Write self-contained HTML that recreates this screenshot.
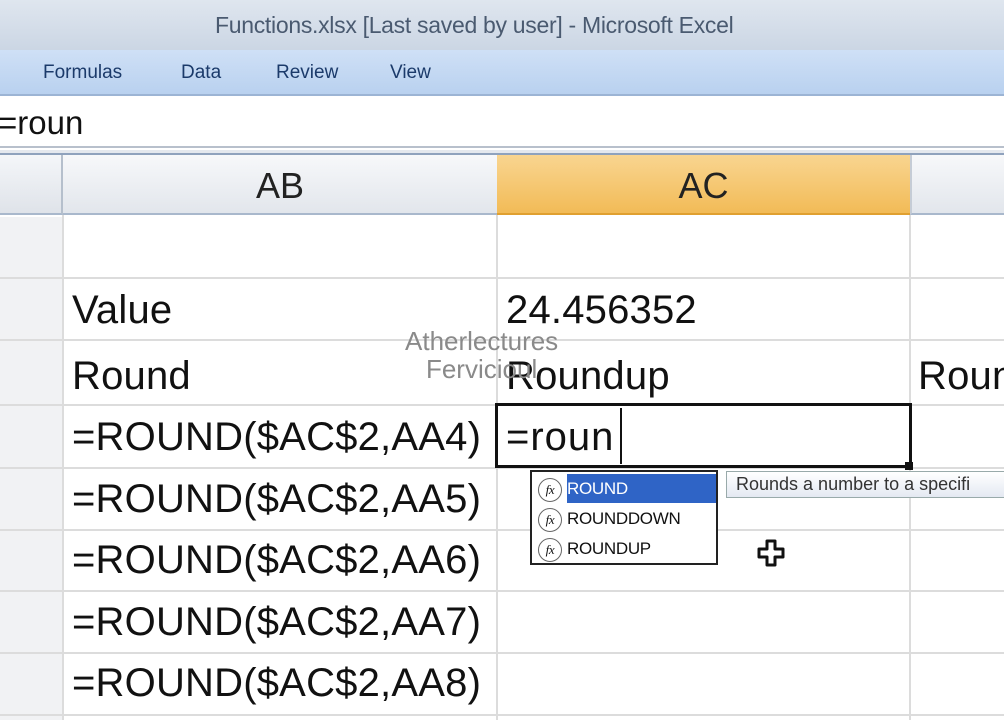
<!DOCTYPE html>
<html><head><meta charset="utf-8"><style>
*{margin:0;padding:0;box-sizing:border-box}
body{width:1004px;height:720px;overflow:hidden;background:#fff;font-family:"Liberation Sans",sans-serif;position:relative}
.a{position:absolute;white-space:nowrap}
.t{font-size:40px;color:#111;letter-spacing:0.2px}
.hl{position:absolute;height:2px;background:#dcdcdc;left:0;width:1004px}
.vl{position:absolute;width:2px;background:#dcdcdc;top:215px;height:505px}
.fx{display:inline-block;width:24px;height:24px;border:1.5px solid #666;border-radius:50%;font-size:13px;text-align:center;line-height:21px;font-style:italic;vertical-align:middle;font-family:"Liberation Serif",serif}
</style></head><body>
<div class="a" style="left:0;top:0;width:1004px;height:50px;background:linear-gradient(#dfe6ef,#cbd6e4)"></div>
<div class="a" style="left:215px;top:12px;font-size:23px;color:#4a5a70;letter-spacing:-0.3px">Functions.xlsx [Last saved by user] - Microsoft Excel</div>
<div class="a" style="left:0;top:50px;width:1004px;height:46px;background:linear-gradient(#cfe0f6,#b9d1ef);border-bottom:2px solid #9cb4d4"></div>
<div class="a" style="left:43px;top:62px;font-size:19px;color:#1b3a6a">Formulas</div>
<div class="a" style="left:181px;top:62px;font-size:19px;color:#1b3a6a">Data</div>
<div class="a" style="left:276px;top:62px;font-size:19px;color:#1b3a6a">Review</div>
<div class="a" style="left:390px;top:62px;font-size:19px;color:#1b3a6a">View</div>
<div class="a" style="left:0;top:98px;width:1004px;height:50px;background:#fff;border-bottom:2px solid #b8c0cc"></div>
<div class="a" style="left:-2px;top:104px;font-size:33px;color:#111">=roun</div>
<div class="a" style="left:0;top:150px;width:1004px;height:5px;background:#e4e8ee;border-bottom:2px solid #8fa2bd"></div>
<div class="a" style="left:0;top:155px;width:63px;height:60px;background:linear-gradient(#f4f6f9,#dfe3e9);border-right:2px solid #b5bfcc;border-bottom:2px solid #a9b8cc"></div>
<div class="a" style="left:63px;top:155px;width:434px;height:60px;background:linear-gradient(#f7f8fa,#e2e6ec);border-bottom:2px solid #a9b8cc;text-align:center;font-size:36px;line-height:62px;color:#222">AB</div>
<div class="a" style="left:497px;top:155px;width:413px;height:60px;background:linear-gradient(#f9d590,#f2bb57);border-bottom:2px solid #e0a030;text-align:center;font-size:36px;line-height:62px;color:#222">AC</div>
<div class="a" style="left:910px;top:155px;width:94px;height:60px;background:linear-gradient(#f7f8fa,#e2e6ec);border-left:2px solid #c5ccd6;border-bottom:2px solid #a9b8cc"></div>
<div class="a" style="left:0;top:217px;width:63px;height:503px;background:#f1f2f4"></div>
<div class="hl" style="top:277px"></div><div class="hl" style="top:339px"></div><div class="hl" style="top:404px"></div><div class="hl" style="top:467px"></div><div class="hl" style="top:529px"></div><div class="hl" style="top:590px"></div><div class="hl" style="top:652px"></div><div class="hl" style="top:714px"></div>
<div class="vl" style="left:62px"></div><div class="vl" style="left:496px"></div><div class="vl" style="left:909px"></div>
<div class="a t" style="left:72px;top:288px">Value</div>
<div class="a t" style="left:506px;top:288px">24.456352</div>
<div class="a t" style="left:72px;top:354px">Round</div>
<div class="a t" style="left:506px;top:354px">Roundup</div>
<div class="a t" style="left:918px;top:354px">Roun</div>
<div class="a" style="left:405px;top:327px;font-size:26px;color:#8a8a8a;text-align:center;line-height:28px">Atherlectures<br>Fervicioul</div>
<div class="a t" style="left:72px;top:415px">=ROUND($AC$2,AA4)</div>
<div class="a t" style="left:72px;top:477px">=ROUND($AC$2,AA5)</div>
<div class="a t" style="left:72px;top:538px">=ROUND($AC$2,AA6)</div>
<div class="a t" style="left:72px;top:600px">=ROUND($AC$2,AA7)</div>
<div class="a t" style="left:72px;top:661px">=ROUND($AC$2,AA8)</div>
<div class="a" style="left:495px;top:403px;width:417px;height:65px;border:3px solid #111;background:#fff"></div>
<div class="a" style="left:905px;top:462px;width:8px;height:8px;background:#111"></div>
<div class="a t" style="left:506px;top:415px;letter-spacing:1px">=roun</div>
<div class="a" style="left:620px;top:408px;width:2px;height:56px;background:#111"></div>
<div class="a" style="left:530px;top:470px;width:188px;height:95px;border:2px solid #222;background:#fff"></div>
<div class="a" style="left:567px;top:474px;width:149px;height:29px;background:#2f64c6"></div>
<div class="a" style="left:538px;top:474px;font-size:17px;line-height:30px;color:#111;letter-spacing:-0.3px">
<div><span class="fx">fx</span><span style="color:#fff;margin-left:5px">ROUND</span></div>
<div><span class="fx">fx</span><span style="margin-left:5px">ROUNDDOWN</span></div>
<div><span class="fx">fx</span><span style="margin-left:5px">ROUNDUP</span></div>
</div>
<div class="a" style="left:726px;top:471px;width:290px;height:27px;border:1px solid #9aa;background:linear-gradient(#fff,#e4e9f2);font-size:18px;line-height:25px;padding-left:9px;color:#333">Rounds a number to a specifi</div>
<svg class="a" style="left:757px;top:539px" width="28" height="28" viewBox="0 0 28 28"><path d="M10 2h8v8h8v8h-8v8h-8v-8H2v-8h8z" fill="#fff" stroke="#111" stroke-width="3" stroke-linejoin="round"/></svg>
</body></html>
